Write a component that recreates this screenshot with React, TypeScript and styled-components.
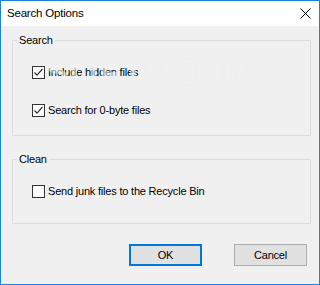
import React from "react";
import styled, { createGlobalStyle } from "styled-components";

const GlobalStyle = createGlobalStyle`
  html, body {
    margin: 0;
    padding: 0;
    background: #ffffff;
  }
  * {
    box-sizing: border-box;
  }
`;

const Window = styled.div`
  position: relative;
  width: 320px;
  height: 285px;
  border: 1px solid #1883d7;
  background: #f0f0f0;
  display: flex;
  flex-direction: column;
  font-family: "Liberation Sans", Arial, sans-serif;
  font-size: 11px;
  letter-spacing: -0.2px;
  color: #000000;
  overflow: hidden;
`;

const TitleBar = styled.div`
  height: 25px;
  background: #ffffff;
  display: flex;
  align-items: center;
  justify-content: space-between;
  padding: 0 8px 0 6px;
  flex-shrink: 0;
`;

const Title = styled.span`
  font-size: 11.5px;
  line-height: 15px;
`;

const Body = styled.div`
  display: flex;
  flex-direction: column;
  padding: 14px 8px 0 11px;
`;

const Group = styled.div<{ $bottom: number; $gapTop?: number }>`
  position: relative;
  border: 1px solid #dcdcdc;
  padding: 25px 0 ${(p) => p.$bottom}px 19px;
  margin-top: ${(p) => p.$gapTop ?? 0}px;
  display: flex;
  flex-direction: column;
  gap: 25px;
`;

const GroupLabel = styled.span`
  position: absolute;
  top: -8px;
  left: 4px;
  padding: 0 2px;
  line-height: 15px;
  background: #f0f0f0;
`;

const Row = styled.label`
  display: flex;
  align-items: center;
  gap: 3px;
  height: 13px;
  line-height: 13px;
`;

const Box = styled.span`
  width: 13px;
  height: 13px;
  border: 1px solid #333333;
  background: #ffffff;
  display: flex;
  align-items: center;
  justify-content: center;
  flex-shrink: 0;
`;

const ButtonRow = styled.div`
  display: flex;
  justify-content: flex-end;
  gap: 32px;
  margin-top: 20px;
  padding-right: 4px;
`;

const Button = styled.button<{ $default?: boolean }>`
  width: 73px;
  height: 22px;
  padding: 0;
  background: #e1e1e1;
  border: ${(p) => (p.$default ? "2px solid #0078d7" : "1px solid #adadad")};
  font-family: inherit;
  font-size: 11px;
  letter-spacing: -0.2px;
  color: #000000;
`;

const Watermark = styled.div`
  position: absolute;
  left: 44px;
  top: 51px;
  font-family: "Liberation Sans", Arial, sans-serif;
  font-weight: 700;
  font-size: 36px;
  letter-spacing: 1px;
  color: rgba(255, 255, 255, 0.55);
  text-shadow: 0 0 1px rgba(0, 0, 0, 0.06);
  pointer-events: none;
  sup {
    font-size: 10px;
    font-weight: 400;
    vertical-align: top;
    margin-left: 1px;
  }
`;

const CloseIcon = () => (
  <svg width="11" height="11" viewBox="0 0 11 11">
    <path d="M0.5 0.5 L10.5 10.5 M10.5 0.5 L0.5 10.5" stroke="#000" strokeWidth="1" />
  </svg>
);

const CheckBox = ({ checked }: { checked: boolean }) => (
  <Box>
    {checked && (
      <svg width="11" height="11" viewBox="0 0 11 11">
        <polyline points="1.5,5.5 4,8.2 9.5,2" fill="none" stroke="#333" strokeWidth="1.2" />
      </svg>
    )}
  </Box>
);

const options = [
  { label: "Include hidden files", checked: true },
  { label: "Search for 0-byte files", checked: true },
];

export default function App() {
  return (
    <>
      <GlobalStyle />
      <Window>
        <TitleBar>
          <Title>Search Options</Title>
          <CloseIcon />
        </TitleBar>
        <Body>
          <Group $bottom={18}>
            <GroupLabel>Search</GroupLabel>
            {options.map((o) => (
              <Row key={o.label}>
                <CheckBox checked={o.checked} />
                {o.label}
              </Row>
            ))}
          </Group>
          <Group $bottom={25} $gapTop={23}>
            <GroupLabel>Clean</GroupLabel>
            <Row>
              <CheckBox checked={false} />
              Send junk files to the Recycle Bin
            </Row>
          </Group>
          <ButtonRow>
            <Button $default>OK</Button>
            <Button>Cancel</Button>
          </ButtonRow>
        </Body>
        <Watermark>
          SOFTPEDIA<sup>®</sup>
        </Watermark>
      </Window>
    </>
  );
}
